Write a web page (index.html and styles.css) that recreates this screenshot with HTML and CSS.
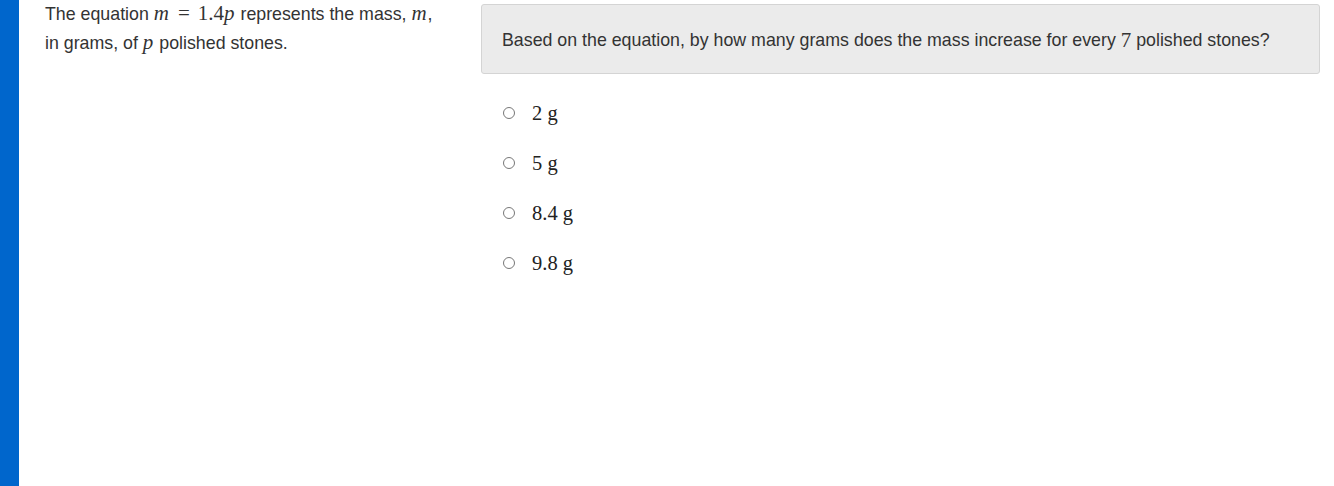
FILE: index.html
```html
<!DOCTYPE html>
<html>
<head>
<meta charset="utf-8">
<link rel="stylesheet" href="styles.css">
</head>
<body>
<div class="page">
  <div class="bar"></div>
  <div class="passage">
    <p>The equation <span class="math"><i>m</i><span class="op">=</span>1.4<i>p</i></span> represents the mass, <span class="math"><i>m</i></span>, in grams, of <span class="math"><i>p</i></span> polished stones.</p>
  </div>
  <div class="question">
    <div class="stem">Based on the equation, by how many grams does the mass increase for every&nbsp;<span class="math">7</span>&nbsp;polished stones?</div>
    <ul class="choices">
      <li class="choice"><span class="radio"></span><span class="label">2 g</span></li>
      <li class="choice"><span class="radio"></span><span class="label">5 g</span></li>
      <li class="choice"><span class="radio"></span><span class="label">8.4 g</span></li>
      <li class="choice"><span class="radio"></span><span class="label">9.8 g</span></li>
    </ul>
  </div>
</div>
</body>
</html>
```
FILE: styles.css
```css
html, body {
  margin: 0;
  padding: 0;
  background: #fff;
}
.page {
  display: flex;
  height: 486px;
  font-family: "Liberation Sans", Arial, sans-serif;
  color: #333;
  font-size: 17.8px;
}
.bar {
  width: 19px;
  flex: none;
  background: #0066cc;
}
.passage {
  width: 398px;
  flex: none;
  padding-left: 26px;
  margin-right: 38px;
}
.passage p {
  margin: 0;
  margin-top: -1px;
  line-height: 28px;
}
.math {
  font-family: "Liberation Serif", "Times New Roman", serif;
  font-size: 21px;
}
.math i {
  font-style: italic;
  letter-spacing: 1px;
}
.op {
  padding: 0 8px;
}
.question {
  flex: 1;
  padding-top: 4px;
  padding-right: 14px;
}
.stem {
  background: #ebebeb;
  border: 1px solid #d4d4d4;
  border-radius: 3px;
  box-sizing: border-box;
  height: 70px;
  display: flex;
  align-items: center;
  padding-left: 20px;
  padding-top: 3px;
}
.choices {
  list-style: none;
  margin: 0;
  padding: 0;
  padding-top: 14px;
}
.choice {
  display: flex;
  align-items: center;
  height: 50px;
  padding-left: 22px;
}
.radio {
  width: 10px;
  height: 10px;
  border: 1px solid #777;
  border-radius: 50%;
  margin-right: 17px;
  flex: none;
}
.label {
  font-family: "Liberation Serif", "Times New Roman", serif;
  font-size: 20.5px;
  color: #222;
}
```
